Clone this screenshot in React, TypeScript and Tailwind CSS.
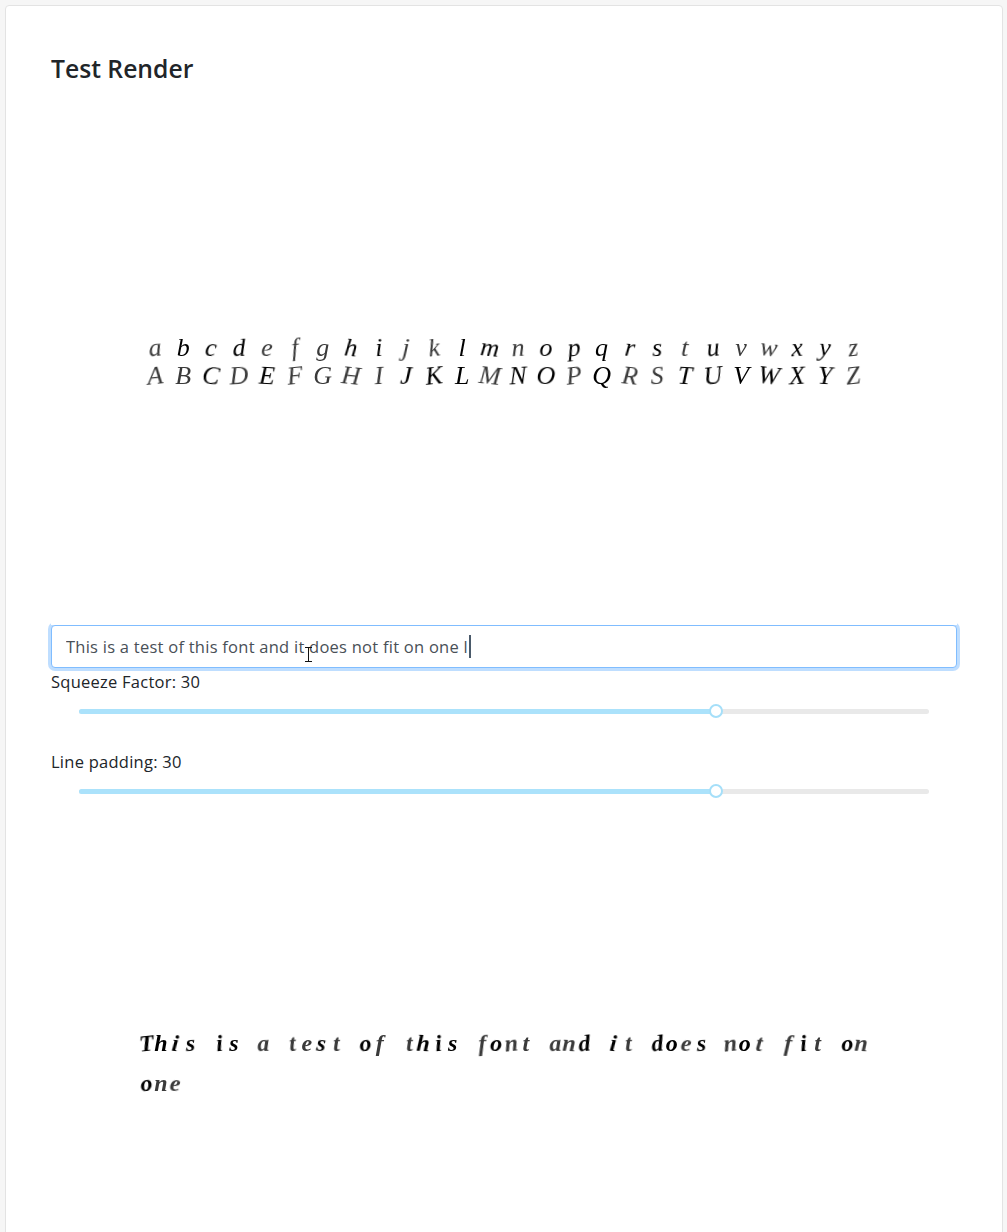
const lower = 'abcdefghijklmnopqrstuvwxyz'.split('');
const upper = 'ABCDEFGHIJKLMNOPQRSTUVWXYZ'.split('');
const faintGlyphs = 'aefgjkntvwzABDFGHIMPRSZ';

function GlyphRow({ chars, cellClass }: { chars: string[]; cellClass: string }) {
  return (
    <div className="flex">
      {chars.map((ch, i) => (
        <span
          key={i}
          style={{ transform: `rotate(${((i * 7) % 5) * 3 - 6}deg)` }}
          className={`${cellClass} text-center shrink-0 blur-[0.6px] ${faintGlyphs.includes(ch) ? 'text-[#3a3a3a]' : 'text-[#000000]'}`}
        >
          {ch === ' ' ? '\u00a0' : ch}
        </span>
      ))}
    </div>
  );
}

function Slider({ label, value }: { label: string; value: number }) {
  return (
    <div className="h-[80px]">
      <div className="text-[16.5px] tracking-[0.25px] leading-[24px] text-[#212529]">
        {label}: {value}
      </div>
      <div className="mx-[28px] mt-[15px] h-[5px] rounded-[3px] bg-[#e9e9e9] relative">
        <div className="w-[75%] h-full rounded-[3px] bg-[#abe2fb]" />
        <div className="absolute left-[74.9%] top-[-5px] -ml-[7px] w-[14px] h-[14px] rounded-full border-2 border-[#a5dff9] bg-white" />
      </div>
    </div>
  );
}

export default function App() {
  return (
    <div className="h-[1232px] overflow-hidden bg-[#f6f6f6] pt-[5px] pl-[5px] pr-[4px] font-['Open_Sans',sans-serif]">
      <div className="h-[1300px] bg-white border border-[#e3e3e3] rounded-[4px] px-[45px] pt-[45px]">
        <h2 className="text-[24.7px] leading-[36px] font-semibold text-[#212529] mb-[8px]">Test Render</h2>

        <div className="relative z-10 h-[530px] bg-white flex flex-col items-center justify-center font-['Liberation_Serif',serif] italic text-[26px] leading-[28px]">
          <div className="mt-[3px]">
            <GlyphRow chars={lower} cellClass="w-[27.9px]" />
            <GlyphRow chars={upper} cellClass="w-[27.9px]" />
          </div>
        </div>

        <div className="relative">
          <input
            readOnly
            value="This is a test of this font and it does not fit on one l"
            className="block w-full h-[43px] px-[14px] text-[16.5px] tracking-[0.25px] text-[#495057] bg-white border border-[#80bdff] rounded-[4px] outline-none shadow-[0_0_0_3px_rgba(0,123,255,0.25)] font-['Open_Sans',sans-serif]"
          />
          <span className="absolute left-[418px] top-[10px] w-[2px] h-[23px] bg-[#4a5a6a]" />
          <svg className="absolute left-[253px] top-[22px]" width="9" height="15" viewBox="0 0 9 15" fill="none" stroke="#111111" strokeWidth="1">
            <path d="M1 .5h7M4.5 .5v14M1 14.5h7" />
          </svg>
        </div>

        <div className="pt-[2px]">
          <Slider label="Squeeze Factor" value={30} />
          <Slider label="Line padding" value={30} />
        </div>

        <div className="h-[400px] flex flex-col items-center justify-center font-['Liberation_Serif',serif] italic font-bold text-[24px] leading-[40px]">
          <div className="w-[730px] mt-[66px]">
            <GlyphRow chars={'This is a test of this font and it does not fit on'.split('')} cellClass="w-[14.6px]" />
            <GlyphRow chars={'one'.split('')} cellClass="w-[14.6px]" />
          </div>
        </div>
      </div>
    </div>
  );
}
